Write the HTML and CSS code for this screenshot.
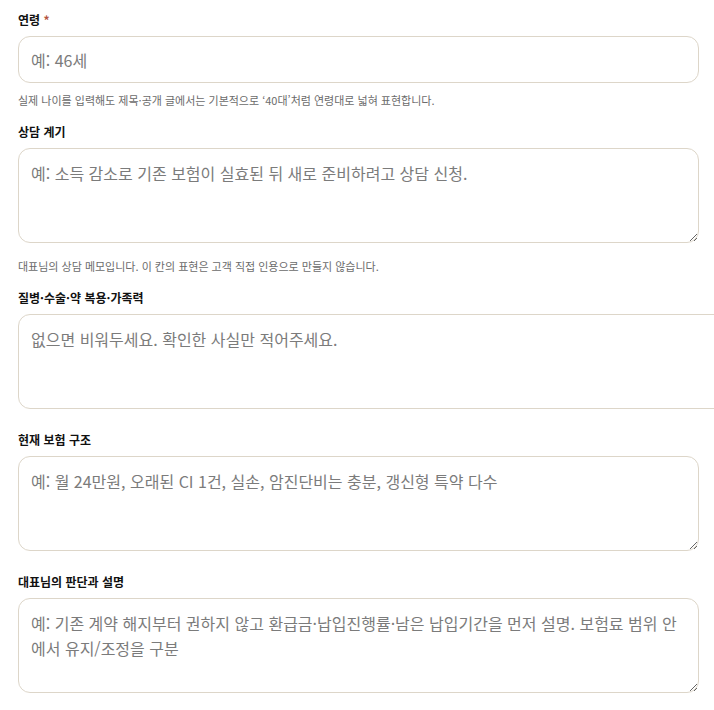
FILE: index.html
```html
<!doctype html>
<html lang="ko">
<head>
<meta charset="utf-8">
<title>상담 기록</title>
<meta name="viewport" content="width=device-width, initial-scale=1.0">
<link rel="stylesheet" href="styles.css">
</head>
<body>
<form id="consult" class="form">

    <!-- 기본 정보 -->
    <div class="field">
        <label for="age">연령 <span class="req">*</span></label>
        <input id="age" type="text" placeholder="예: 46세">
        <p class="hint">실제 나이를 입력해도 제목·공개 글에서는 기본적으로 ‘40대’처럼 연령대로 넓혀 표현합니다.</p>
    </div>

    <div class="field">
        <label for="reason">상담 계기</label>
        <textarea id="reason" placeholder="예: 소득 감소로 기존 보험이 실효된 뒤 새로 준비하려고 상담 신청."></textarea>
        <p class="hint">대표님의 상담 메모입니다. 이 칸의 표현은 고객 직접 인용으로 만들지 않습니다.</p>
    </div>

    <div class="field">
        <label for="health">질병·수술·약 복용·가족력</label>
        <textarea id="health" class="wide" placeholder="없으면 비워두세요. 확인한 사실만 적어주세요."></textarea>
    </div>

    <!-- 보험 -->
    <div class="field">
        <label for="current">현재 보험 구조</label>
        <textarea id="current" placeholder="예: 월 24만원, 오래된 CI 1건, 실손, 암진단비는 충분, 갱신형 특약 다수"></textarea>
    </div>

    <div class="field">
        <label for="opinion">대표님의 판단과 설명</label>
        <textarea id="opinion" placeholder="예: 기존 계약 해지부터 권하지 않고 환급금·납입진행률·남은 납입기간을 먼저 설명. 보험료 범위 안에서 유지/조정을 구분"></textarea>
    </div>

</form>
</body>
</html>
```

FILE: styles.css
```css
/*reset*/
* {
    margin: 0;
    padding: 0;
    box-sizing: border-box;
}

html, body {
    overflow-x: hidden;
}
body {
    font-family: "Noto Sans CJK KR", "Noto Sans", sans-serif;
    color: #111;
    background: #fff;
    padding: 11px 15px 0 18px;
}

.field {
    padding-bottom: 15px;
}
.field label {
    display: block;
    font-size: 12px;
    line-height: 18px;
    font-weight: bold;
    margin-bottom: 7px;
}
.req {
    color: #b4563f;
}

input[type=text], textarea {
    display: block;
    width: 100%;
    font-family: inherit;
    font-size: 16px;
    line-height: 25px;
    color: #333;
    background: #fff;
    border: 1px solid #ddd6c9;
    border-radius: 12px;
    padding: 10px 12px;
    outline: none;
}
input[type=text] {
    height: 47px;
}
textarea {
    height: 95px;
    padding-top: 12px;
    margin-bottom: 7px;
    resize: vertical;
}
textarea.wide {
    width: 740px; /*늘려둔 칸*/
}
::placeholder {
    color: #7b7b7b;
}

.hint {
    font-size: 11px;
    line-height: 16px;
    color: #6b6b6b;
    margin-top: 9px;
}
textarea + .hint {
    margin-top: 15px;
}
```
